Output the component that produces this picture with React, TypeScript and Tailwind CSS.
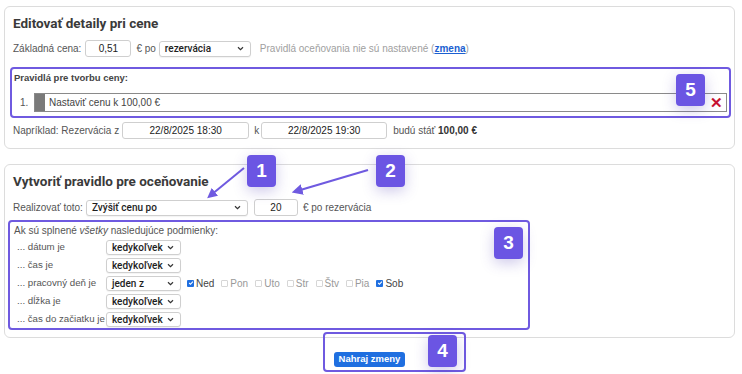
import React from "react";

const Chevron = () => (
  <svg width="7" height="5" viewBox="0 0 7 5" className="shrink-0">
    <path d="M1 1.2 L3.5 3.6 L6 1.2" fill="none" stroke="#333" strokeWidth="1.2" />
  </svg>
);

function Sel({ w, text, h = 16 }: { w: number; text: string; h?: number }) {
  return (
    <div
      className="flex items-center justify-between border border-[#cfcfcf] rounded-[3px] bg-white pl-[5px] pr-[6px] text-[10px] font-medium text-[#1e1e1e] shadow-[0_1px_1px_rgba(0,0,0,0.05)]"
      style={{ width: w, height: h, fontFamily: "Roboto, Arial, sans-serif" }}
    >
      <span className="whitespace-nowrap">{text}</span>
      <Chevron />
    </div>
  );
}

function Inp({ w, text }: { w: number; text: string }) {
  return (
    <div
      className="flex items-center justify-center border border-[#cfcfcf] rounded-[3px] bg-white h-[17px] text-[10px] text-[#222]"
      style={{ width: w }}
    >
      {text}
    </div>
  );
}

function Badge({ n, x, y }: { n: string; x: number; y: number }) {
  return (
    <div
      className="absolute w-[29px] h-[32px] rounded-[4px] bg-[#6b55e3] text-white flex items-center justify-center text-[19px] font-bold shadow-[0_4px_14px_rgba(80,60,180,0.28)]"
      style={{ left: x, top: y }}
    >
      {n}
    </div>
  );
}

function Cb({ label, checked }: { label: string; checked?: boolean }) {
  return (
    <div className="flex items-center gap-[2px]">
      {checked ? (
        <div className="w-[7px] h-[7px] rounded-[1px] bg-[#1f6fe0] flex items-center justify-center">
          <svg width="6" height="6" viewBox="0 0 6 6">
            <path d="M1.2 3 L2.5 4.3 L4.9 1.6" fill="none" stroke="white" strokeWidth="1.1" />
          </svg>
        </div>
      ) : (
        <div className="w-[7px] h-[7px] rounded-[1px] border border-[#d6d6d6] bg-white" />
      )}
      <span className={checked ? "text-[#444]" : "text-[#999]"}>{label}</span>
    </div>
  );
}

function CondRow({ label, sel, children }: { label: string; sel: string; children?: React.ReactNode }) {
  return (
    <div className="flex items-center h-[18px]">
      <div className="w-[92px] pl-[3px] text-[#555] whitespace-nowrap text-[9.7px]">{label}</div>
      <Sel w={75} text={sel} h={15} />
      {children}
    </div>
  );
}

const titleFont = { fontFamily: "Roboto, Arial, sans-serif" };

export default function App() {
  return (
    <div
      className="relative w-[742px] h-[374px] bg-white overflow-hidden text-[10px] text-[#555]"
      style={{ fontFamily: '"Liberation Sans", Arial, sans-serif' }}
    >
      {/* Panel 1 */}
      <div className="ml-[4px] mr-[7px] mt-[6px] h-[143px] border border-[#dcdcdc] rounded-[6px] pl-[8px] pr-[3px]">
        <div className="pt-[6px] h-[33px] text-[13.5px] font-bold text-[#3a3a3a] leading-[20px]" style={titleFont}>Editovať detaily pri cene</div>
        <div className="flex items-center h-[17px]">
          <span>Základná cena:</span>
          <div className="ml-[4px]"><Inp w={46} text="0,51" /></div>
          <span className="ml-[5px]">€ po</span>
          <div className="ml-[3px]"><Sel w={92} text="rezervácia" /></div>
          <span className="ml-[9px] text-[#a0a0a0]">
            Pravidlá oceňovania nie sú nastavené (
            <span className="text-[#1b5fd1] underline font-semibold">zmena</span>)
          </span>
        </div>
        <div className="mt-[10px] ml-[-3px] h-[51px] border-2 border-[#6f5ae0] rounded-[4px] pl-[2px] pr-[2px]">
          <div className="h-[18px] pt-[1px] font-bold text-[#444] text-[9.5px] flex items-center">Pravidlá pre tvorbu ceny:</div>
          <div className="flex items-center mt-[6px]">
            <span className="w-[20px] pl-[6px] text-[#555]">1.</span>
            <div className="flex-1 h-[19px] border border-[#8a8a8a] flex items-center">
              <div className="w-[10px] h-full bg-[#7a7a7a]" />
              <span className="ml-[4px] text-[#444]">Nastaviť cenu k 100,00 €</span>
              <span className="ml-auto mr-[3px] text-[#c8102e] text-[15px] font-bold leading-none">✕</span>
            </div>
          </div>
        </div>
        <div className="flex items-center mt-[4px] h-[17px]">
          <span>Napríklad: Rezervácia z</span>
          <div className="ml-[3px]"><Inp w={127} text="22/8/2025 18:30" /></div>
          <span className="ml-[5px]">k</span>
          <div className="ml-[2px]"><Inp w={126} text="22/8/2025 19:30" /></div>
          <span className="ml-[6px]">budú stáť <b className="text-[#333]">100,00 €</b></span>
        </div>
      </div>

      {/* Panel 2 */}
      <div className="ml-[4px] mr-[7px] mt-[15px] h-[174px] border border-[#dcdcdc] rounded-[6px] pl-[3px]">
        <div className="pl-[5px] pt-[6px] h-[34px] text-[13.5px] font-bold text-[#3a3a3a] leading-[20px]" style={titleFont}>Vytvoriť pravidlo pre oceňovanie</div>
        <div className="flex items-center pl-[5px] h-[17px]">
          <span>Realizovať toto:</span>
          <div className="ml-[3px]"><Sel w={162} text="Zvýšiť cenu po" /></div>
          <div className="ml-[6px]"><Inp w={44} text="20" /></div>
          <span className="ml-[5px]">€ po rezervácia</span>
        </div>
        <div className="mt-[4px] w-[522px] h-[110px] border-2 border-[#6f5ae0] rounded-[4px] pl-[4px] pt-[1px]">
          <div className="h-[15px] flex items-center text-[#555]">
            Ak sú splnené&nbsp;<i>všetky</i>&nbsp;nasledujúce podmienky:
          </div>
          <CondRow label="... dátum je" sel="kedykoľvek" />
          <CondRow label="... čas je" sel="kedykoľvek" />
          <CondRow label="... pracovný deň je" sel="jeden z">
            <div className="flex items-center gap-[7px] ml-[6px]">
              <Cb label="Ned" checked />
              <Cb label="Pon" />
              <Cb label="Uto" />
              <Cb label="Str" />
              <Cb label="Štv" />
              <Cb label="Pia" />
              <Cb label="Sob" checked />
            </div>
          </CondRow>
          <CondRow label="... dĺžka je" sel="kedykoľvek" />
          <CondRow label="... čas do začiatku je" sel="kedykoľvek" />
        </div>
      </div>

      {/* Box 4 */}
      <div className="ml-[323px] mt-[-6px] w-[143px] h-[40px] border-2 border-[#6f5ae0] rounded-[4px] pl-[9px] pt-[18px]">
        <div className="w-[71px] h-[15px] rounded-[3px] bg-[#1f6fe0] text-white text-[9.5px] font-bold flex items-center justify-center">
          Nahraj zmeny
        </div>
      </div>

      {/* arrows */}
      <svg className="absolute left-0 top-0" width="742" height="374">
        <defs>
          <marker id="ah" markerWidth="5" markerHeight="5" refX="2.5" refY="2.5" orient="auto" markerUnits="strokeWidth">
            <path d="M0 0 L5 2.5 L0 5 Z" fill="#6f5ae0" />
          </marker>
        </defs>
        <line x1="244" y1="168" x2="211" y2="195" stroke="#6f5ae0" strokeWidth="2" markerEnd="url(#ah)" />
        <line x1="368" y1="170" x2="297" y2="191" stroke="#6f5ae0" strokeWidth="2.2" markerEnd="url(#ah)" />
      </svg>

      <Badge n="1" x={247} y={155} />
      <Badge n="2" x={376} y={155} />
      <Badge n="3" x={494} y={227} />
      <Badge n="4" x={428} y={335} />
      <Badge n="5" x={676} y={74} />
    </div>
  );
}
